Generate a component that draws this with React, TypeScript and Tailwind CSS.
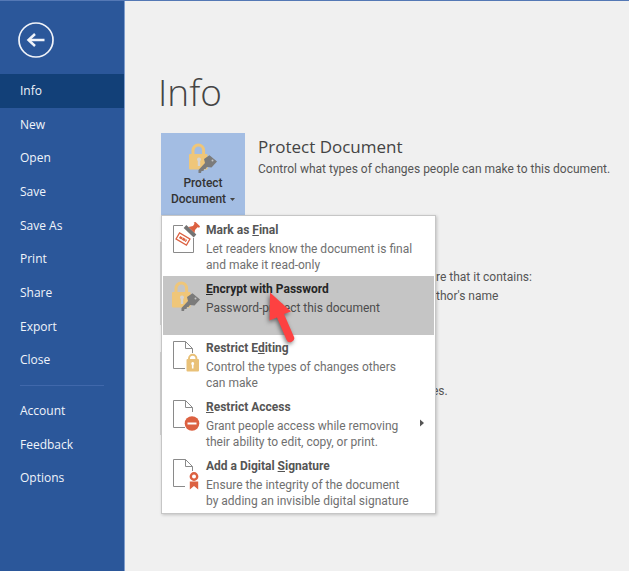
import React from 'react';

const navItems = ['Info', 'New', 'Open', 'Save', 'Save As', 'Print', 'Share', 'Export', 'Close'];
const footerItems = ['Account', 'Feedback', 'Options'];

function LockKeyIcon() {
  return (
    <svg viewBox="0 0 28 30" className="h-[30px] w-7 shrink-0" aria-hidden="true">
      <path d="M4 13V7.500a5.300 5.500 0 0 1 10.600 0v5.500" fill="none" stroke="#efc679" strokeWidth="3" />
      <rect x="0" y="11" width="18.500" height="15.500" rx="1" fill="#efc679" />
      <path d="M10 14.500a2 2 0 0 1 1.200 3.600V23H8.800v-4.900a2 2 0 0 1 1.200-3.600z" fill="#d5d5d5" />
      <path d="M20.500 12.300L28 18.500l-5.500 6-4.500-.5-1.500 2H15l-.500 2h-2l-.500 2H9.500v-3l6.500-7-1-4z" fill="#7b7b7b" />
      <circle cx="23.500" cy="17.500" r="1" fill="#c5c5c5" />
    </svg>
  );
}

function PageOutline() {
  return (
    <>
      <path d="M1.500 1.500h12l7 7V28.500h-19z" fill="#fff" />
      <path d="M20.500 13V8.500l-7-7h-12v27H13M13.500 1.500v7h7" fill="none" stroke="#8a8a8a" />
    </>
  );
}

function FinalIcon() {
  return (
    <svg viewBox="0 0 30 34" className="h-[34px] w-[30px]" aria-hidden="true">
      <path d="M11 3.500H1.500v27h20V16" fill="#fff" stroke="#8a8a8a" />
      <g transform="rotate(30 11 17)" fill="none" stroke="#dc6141">
        <rect x="5" y="13.500" width="12" height="7" strokeWidth="1.300" />
        <path d="M7 17h8" strokeWidth="2.500" strokeDasharray="3 .4" />
      </g>
      <path d="M13 4.500l10 9.500" stroke="#737373" strokeWidth="3.800" />
      <path d="M16.500 5l4.500-1 1.500-2.200-.8-1.300L23.500 0 28 4.200l-.8 1.600-1.700-.5L23 8l-.5 3z" fill="#dc6141" />
    </svg>
  );
}

function EditingIcon() {
  return (
    <svg viewBox="0 0 30 34" className="h-[34px] w-[30px]" aria-hidden="true">
      <PageOutline />
      <path d="M17 20v-1.500a3.700 3.700 0 0 1 7.400 0V20" fill="none" stroke="#e9c178" strokeWidth="2" />
      <rect x="14.500" y="19" width="12.500" height="12.500" rx="1" fill="#e9c178" />
      <path d="M20.700 22a1.600 1.600 0 0 1 .8 2.900V28.500h-1.600v-3.600a1.600 1.600 0 0 1 .8-2.900z" fill="#fff" />
    </svg>
  );
}

function AccessIcon() {
  return (
    <svg viewBox="0 0 30 34" className="h-[34px] w-[30px]" aria-hidden="true">
      <PageOutline />
      <circle cx="20" cy="24.500" r="7.300" fill="#dc6141" />
      <path d="M15.500 24.500h9" stroke="#fff" strokeWidth="2" />
    </svg>
  );
}

function SignatureIcon() {
  return (
    <svg viewBox="0 0 30 34" className="h-[34px] w-[30px]" aria-hidden="true">
      <PageOutline />
      <circle cx="22" cy="18.500" r="3.200" fill="#fff" stroke="#dc6141" strokeWidth="2.400" />
      <path d="M17.800 23.500h8.400v8L22 28l-4.200 3.500z" fill="#dc6141" />
    </svg>
  );
}

interface MenuEntry {
  before: string;
  accessKey: string;
  after: string;
  lines: string[];
  icon: React.ReactNode;
  active?: boolean;
  submenu?: boolean;
}

const menuEntries: MenuEntry[] = [
  {
    before: 'Mark as ',
    accessKey: 'F',
    after: 'inal',
    lines: ['Let readers know the document is final', 'and make it read-only'],
    icon: <FinalIcon />,
  },
  {
    before: '',
    accessKey: 'E',
    after: 'ncrypt with Password',
    lines: ['Password-protect this document'],
    icon: <LockKeyIcon />,
    active: true,
  },
  {
    before: 'Restrict E',
    accessKey: 'd',
    after: 'iting',
    lines: ['Control the types of changes others', 'can make'],
    icon: <EditingIcon />,
  },
  {
    before: '',
    accessKey: 'R',
    after: 'estrict Access',
    lines: ['Grant people access while removing', 'their ability to edit, copy, or print.'],
    icon: <AccessIcon />,
    submenu: true,
  },
  {
    before: 'Add a Digital ',
    accessKey: 'S',
    after: 'ignature',
    lines: ['Ensure the integrity of the document', 'by adding an invisible digital signature'],
    icon: <SignatureIcon />,
  },
];

function MenuItem({ entry }: { entry: MenuEntry }) {
  return (
    <button
      type="button"
      role="menuitem"
      className={`flex h-[59px] w-full items-start pl-[9px] pt-[5px] text-left ${entry.active ? 'bg-[#c5c5c5] text-[#4c4c4c]' : 'text-[#707070]'}`}
    >
      <span className="w-[34px] shrink-0">{entry.icon}</span>
      <span className="grow whitespace-nowrap text-[12px] leading-4">
        <span className={`mb-[3px] block font-bold ${entry.active ? 'text-[#262626]' : 'text-[#555]'}`}>
          {entry.before}
          <span className="underline">{entry.accessKey}</span>
          {entry.after}
        </span>
        {entry.lines.map((line) => (
          <span key={line} className="block">{line}</span>
        ))}
      </span>
      {entry.submenu && (
        <svg viewBox="0 0 4 8" className="mr-[10px] mt-5 h-2 w-1 shrink-0" aria-hidden="true">
          <path d="M0 0.500l4 3.500-4 3.500z" fill="#555" />
        </svg>
      )}
    </button>
  );
}

function NavLink({ label, active }: { label: string; active?: boolean }) {
  return (
    <a
      href="#"
      aria-current={active ? 'page' : undefined}
      className={`flex flex-1 items-center pl-5 ${active ? 'bg-[#124078]' : ''}`}
    >
      {label}
    </a>
  );
}

function Sidebar() {
  return (
    <nav className="w-[125px] shrink-0 border-r border-[#7f9dcc] bg-[#2b579a] font-['Open_Sans',sans-serif] text-[12px] text-[#f0f4fa]">
      <button type="button" aria-label="Back" className="ml-[18px] mt-[21px] block size-9">
        <svg viewBox="0 0 36 36" className="size-9" fill="none" stroke="#f0f3f9" aria-hidden="true">
          <circle cx="18" cy="18" r="17" strokeWidth="1.700" />
          <path d="M26.500 18H11" strokeWidth="2.500" />
          <path d="M17 12l-6.500 6 6.500 6" strokeWidth="2.500" />
        </svg>
      </button>
      <div className="mt-4 flex h-[303px] flex-col">
        {navItems.map((item) => (
          <NavLink key={item} label={item} active={item === 'Info'} />
        ))}
      </div>
      <hr className="mx-5 my-2 border-[#4068ab]" />
      <div className="flex h-[101px] flex-col">
        {footerItems.map((item) => (
          <NavLink key={item} label={item} />
        ))}
      </div>
    </nav>
  );
}

function ProtectMenu() {
  return (
    <div
      role="menu"
      className="absolute left-0 top-full z-10 w-[275px] border border-[#c6c6c6] bg-white p-px shadow-[1px_1px_3px_rgba(0,0,0,0.2)]"
    >
      {menuEntries.map((entry) => (
        <MenuItem key={entry.accessKey + entry.after} entry={entry} />
      ))}
      <svg
        viewBox="0 0 34 56"
        className="absolute left-[104px] top-[75px] h-14 w-[34px] drop-shadow-[-1px_2px_2px_rgba(0,0,0,0.5)]"
        aria-hidden="true"
      >
        <path d="M4 1.500L25 20.500l-7 2.500 9.800 22.500a4 4 0 0 1-7.300 3.300L11 26.500 3.500 29.500z" fill="#fd4141" />
      </svg>
    </div>
  );
}

export default function App() {
  return (
    <div className="flex min-h-screen border-t border-[#5478b5] bg-[#f0f0f0] font-['Roboto',sans-serif] text-[#555]">
      <Sidebar />
      <main className="min-w-0 grow overflow-hidden pl-[35px] pt-[65px]">
        <h1 className="-ml-0.5 font-['Open_Sans',sans-serif] text-[37px] font-light leading-[52px] text-[#444]">Info</h1>
        <section className="mt-[15px] flex pl-px">
          <div className="relative shrink-0">
            <button
              type="button"
              aria-haspopup="menu"
              aria-expanded="true"
              className="flex h-[82px] w-[84px] flex-col items-center bg-[#a3bde3] pt-[10px] text-[12px] font-medium leading-4 text-[#333]"
            >
              <LockKeyIcon />
              <span className="mt-0.5">Protect</span>
              <span className="flex items-center gap-1">
                Document
                <svg viewBox="0 0 5 3" className="h-[3px] w-[5px]" aria-hidden="true">
                  <path d="M0 0h5L2.500 3z" fill="#444" />
                </svg>
              </span>
            </button>
            <ProtectMenu />
          </div>
          <div className="whitespace-nowrap pl-[13px]">
            <h2 className="font-['Open_Sans',sans-serif] text-[17px] leading-7 text-[#444]">Protect Document</h2>
            <p className="text-[12px] leading-4">Control what types of changes people can make to this document.</p>
          </div>
        </section>
        <section className="mt-[27px] flex whitespace-nowrap text-[12px] leading-[19px]">
          <div className="h-[83px] w-[85px] shrink-0 border border-[#d0d0d0]" />
          <div className="pl-[191px] pt-[26px]">
            <p>re that it contains:</p>
            <p>thor's name</p>
          </div>
        </section>
        <section className="mt-[27px] flex whitespace-nowrap text-[12px] leading-[19px]">
          <div className="h-[83px] w-[85px] shrink-0 border border-[#d0d0d0]" />
          <p className="pl-[187px] pt-[30px]">es.</p>
        </section>
      </main>
    </div>
  );
}
